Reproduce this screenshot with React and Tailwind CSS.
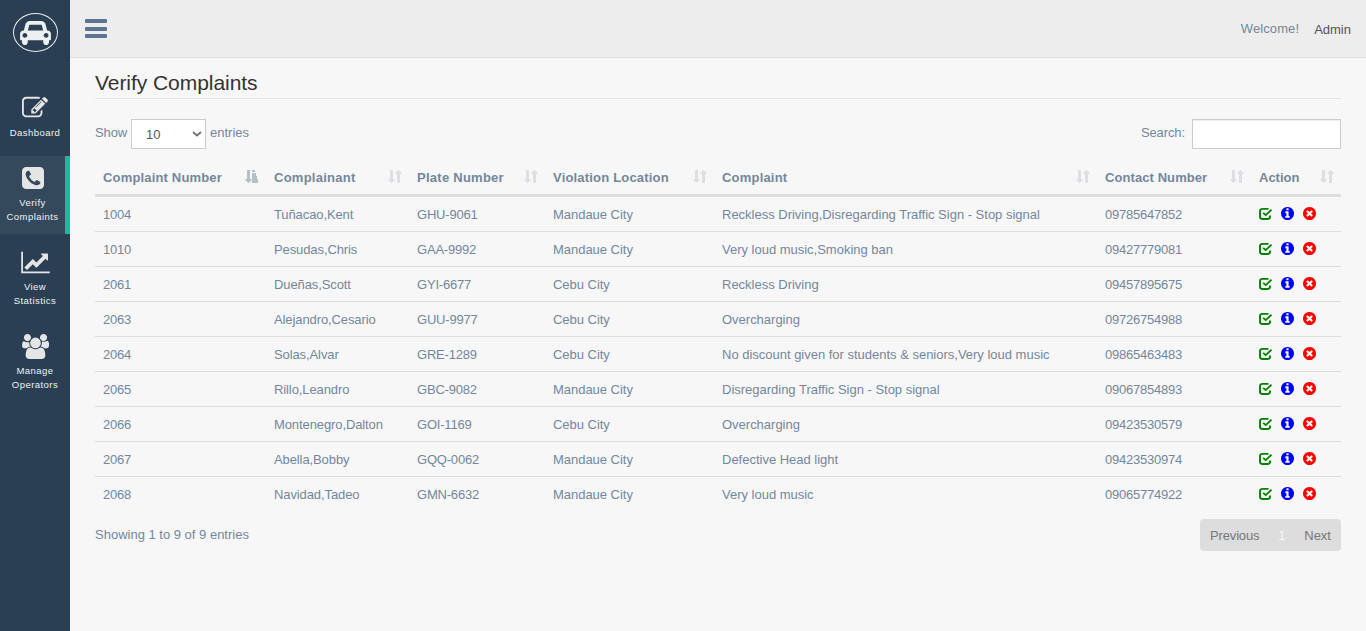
import React from 'react';

const PATHS = {
  car: ['0 0 2048 1792', 'M480 1088q0-66-47-113t-113-47-113 47-47 113 47 113 113 47 113-47 47-113zm36-320h1016l-89-357q-2-8-14-17.5t-21-9.5h-768q-9 0-21 9.5t-14 17.5zm1372 320q0-66-47-113t-113-47-113 47-47 113 47 113 113 47 113-47 47-113zm160-96v384q0 14-9 23t-23 9h-96v128q0 80-56 136t-136 56-136-56-56-136v-128h-1024v128q0 80-56 136t-136 56-136-56-56-136v-128h-96q-14 0-23-9t-9-23v-384q0-93 65.5-158.5t158.5-65.5h28l105-419q23-94 104-157.5t179-63.5h768q98 0 179 63.5t104 157.5l105 419h28q93 0 158.5 65.5t65.5 158.5z'],
  edit: ['0 0 1792 1792', 'M888 1184l116-116-152-152-116 116v56h96v96h56zm440-720q-16-16-33 1l-350 350q-17 17-1 33t33-1l350-350q17-17 1-33zm80 594v190q0 119-84.5 203.5t-203.5 84.5h-832q-119 0-203.5-84.5t-84.5-203.5v-832q0-119 84.5-203.5t203.5-84.5h832q63 0 117 25 15 7 18 23 3 17-9 29l-49 49q-14 14-32 8-23-6-45-6h-832q-66 0-113 47t-47 113v832q0 66 47 113t113 47h832q66 0 113-47t47-113v-126q0-13 9-22l64-64q15-15 35-7t20 29zm-96-738l288 288-672 672h-288v-288zm444 132l-92 92-288-288 92-92q28-28 68-28t68 28l152 152q28 28 28 68t-28 68z'],
  phone: ['128 128 1536 1536', 'M1408 1193q0-11-2-16t-18-16.5-40.5-25-47.5-26.5-45.5-25-28.5-15q-5-3-19-13t-25-15-21-5q-15 0-36.5 20.5t-39.5 45-38.5 45-33.5 20.5q-7 0-16.5-3.5t-15.5-6.5-17-9.5-14-8.5q-99-55-170-126.5t-127-170.5q-2-3-8.5-14t-9.5-17-6.5-15.5-3.5-16.5q0-13 20.5-33.5t45-38.5 45-39.5 20.5-36.5q0-10-5-21t-15-25-13-19q-3-6-15-28.5t-25-45.5-26.5-47.5-25-40.5-16.5-18-16-2q-48 0-101 22-46 21-80 94.5t-34 130.5q0 16 2.5 34t5 30.5 9 33 10 29.5 12.5 33 11 30q60 164 216.5 320.5t320.5 216.5q6 2 30 11t33 12.5 29.5 10 33 9 30.5 5 34 2.5q57 0 130.5-34t94.5-80q22-53 22-101zm256-777v960q0 119-84.5 203.5t-203.5 84.5h-960q-119 0-203.5-84.5t-84.5-203.5v-960q0-119 84.5-203.5t203.5-84.5h960q119 0 203.5 84.5t84.5 203.5z'],
  chart: ['0 0 2048 1792', 'M2048 1536v128h-2048v-1536h128v1408h1920zm-128-1248v435q0 21-19.5 29.5t-35.5-7.5l-121-121-633 633q-10 10-23 10t-23-10l-233-233-416 416-192-192 585-585q10-10 23-10t23 10l233 233 464-464-121-121q-16-16-7.5-35.5t29.5-19.5h435q14 0 23 9t9 23z'],
  users: ['0 0 1920 1792', 'M593 896q-162 5-265 128h-134q-82 0-138-40.5t-56-118.5q0-353 124-353 6 0 43.5 21t97.5 42.5 119 21.5q67 0 133-23-5 37-5 66 0 159 97 293zm1071 637q0 120-73 189.5t-194 69.5h-874q-121 0-194-69.5t-73-189.5q0-53 3.5-103.5t14-109 26.5-108.5 43-97.5 62-81 85.5-53.5 111.5-20q10 0 43 21.5t73 48 107 48 135 21.5 135-21.5 107-48 73-48 43-21.5q61 0 111.5 20t85.5 53.5 62 81 43 97.5 26.5 108.5 14 109 3.5 103.5zm-1024-1277q0 106-75 181t-181 75-181-75-75-181 75-181 181-75 181 75 75 181zm704 384q0 159-112.5 271.5t-271.5 112.5-271.5-112.5-112.5-271.5 112.5-271.5 271.5-112.5 271.5 112.5 112.5 271.5zm576 225q0 78-56 118.5t-138 40.5h-134q-103-123-265-128 97-134 97-293 0-29-5-66 66 23 133 23 59 0 119-21.5t97.5-42.5 43.5-21q124 0 124 353zm-128-609q0 106-75 181t-181 75-181-75-75-181 75-181 181-75 181 75 75 181z'],
  info: ['128 128 1536 1536', 'M1152 1376v-160q0-14-9-23t-23-9h-96v-512q0-14-9-23t-23-9h-320q-14 0-23 9t-9 23v160q0 14 9 23t23 9h96v320h-96q-14 0-23 9t-9 23v160q0 14 9 23t23 9h448q14 0 23-9t9-23zm-128-896v-160q0-14-9-23t-23-9h-192q-14 0-23 9t-9 23v160q0 14 9 23t23 9h192q14 0 23-9t9-23zm640 416q0 209-103 385.5t-279.5 279.5-385.5 103-385.5-103-279.5-279.5-103-385.5 103-385.5 279.5-279.5 385.5-103 385.5 103 279.5 279.5 103 385.5z'],
  times: ['128 128 1536 1536', 'M1277 1122q0-26-19-45l-181-181 181-181q19-19 19-45 0-27-19-46l-90-90q-19-19-46-19-26 0-45 19l-181 181-181-181q-19-19-45-19-27 0-46 19l-90 90q-19 19-19 46 0 26 19 45l181 181-181 181q-19 19-19 45 0 27 19 46l90 90q19 19 46 19 26 0 45-19l181-181 181 181q19 19 45 19 27 0 46-19l90-90q19-19 19-46zm387-226q0 209-103 385.5t-279.5 279.5-385.5 103-385.5-103-279.5-279.5-103-385.5 103-385.5 279.5-279.5 385.5-103 385.5 103 279.5 279.5 103 385.5z'],
};

function Icon({ name, className }) {
  const [viewBox, d] = PATHS[name];
  return (
    <svg viewBox={viewBox} fill="currentColor" className={`block shrink-0 ${className}`}>
      <path d={d} />
    </svg>
  );
}

function CheckIcon() {
  return (
    <svg width="13" height="13" viewBox="0 0 13 13" fill="none" stroke="currentColor" className="block shrink-0 text-[#008000]">
      <path d="M9.500 1.900H3.500Q1 1.900 1 4.200v5.600q0 2.200 2.500 2.200h5q2.500 0 2.500-2.200V8.500" strokeWidth="1.900" />
      <path d="M4.200 5.800l2.500 2.300L12.500 2.700" strokeWidth="1.800" />
    </svg>
  );
}

function SortIcon({ sorted }) {
  return (
    <svg width="14" height="14" viewBox="0 0 14 14" fill="currentColor" className={sorted ? 'block text-[#b3bfcb]' : 'block text-[#dcdfe4]'}>
      <path d="M2 0h3v9h1.500v1.500L3.500 13 .5 10.500V9H2z" />
      {sorted ? <path d="M7 0h3v2H7zM7 3h4v3h1v3h1v4H7z" /> : <path d="M9 13h3V4h1.500V2.500L10.500 0l-3 2.500V4H9z" />}
    </svg>
  );
}

const NAV = [
  { icon: 'edit', lines: ['Dashboard'], size: 'h-[26px] w-[26px]' },
  { icon: 'phone', lines: ['Verify', 'Complaints'], size: 'h-[22px] w-[22px]', active: true },
  { icon: 'chart', lines: ['View', 'Statistics'], size: 'h-[25px] w-[29px]' },
  { icon: 'users', lines: ['Manage', 'Operators'], size: 'h-[25px] w-[27px]' },
];

const COLUMNS = [
  ['Complaint Number', 'w-[171px]', 'tracking-[0.17px]'],
  ['Complainant', 'w-[143px]', 'tracking-[0.25px]'],
  ['Plate Number', 'w-[136px]', 'tracking-[0.26px]'],
  ['Violation Location', 'w-[169px]', 'tracking-[0.19px]'],
  ['Complaint', 'w-[383px]', 'tracking-[0.2px]'],
  ['Contact Number', 'w-[154px]', 'tracking-[0.08px]'],
  ['Action', 'w-[90px]', 'tracking-[0px]'],
];

const ROWS = [
  ['1004', 'Tuñacao,Kent', 'GHU-9061', 'Mandaue City', 'Reckless Driving,Disregarding Traffic Sign - Stop signal', '09785647852'],
  ['1010', 'Pesudas,Chris', 'GAA-9992', 'Mandaue City', 'Very loud music,Smoking ban', '09427779081'],
  ['2061', 'Dueñas,Scott', 'GYI-6677', 'Cebu City', 'Reckless Driving', '09457895675'],
  ['2063', 'Alejandro,Cesario', 'GUU-9977', 'Cebu City', 'Overcharging', '09726754988'],
  ['2064', 'Solas,Alvar', 'GRE-1289', 'Cebu City', 'No discount given for students & seniors,Very loud music', '09865463483'],
  ['2065', 'Rillo,Leandro', 'GBC-9082', 'Mandaue City', 'Disregarding Traffic Sign - Stop signal', '09067854893'],
  ['2066', 'Montenegro,Dalton', 'GOI-1169', 'Cebu City', 'Overcharging', '09423530579'],
  ['2067', 'Abella,Bobby', 'GQQ-0062', 'Mandaue City', 'Defective Head light', '09423530974'],
  ['2068', 'Navidad,Tadeo', 'GMN-6632', 'Mandaue City', 'Very loud music', '09065774922'],
];

const CELL_TRACKING = ['tracking-[-0.23px]', 'tracking-[-0.1px]', 'tracking-[-0.2px]', 'tracking-[-0.03px]', 'tracking-[-0.01px]', 'tracking-[-0.23px]'];

function Sidebar() {
  return (
    <aside className="flex w-[70px] shrink-0 flex-col bg-[#2a3f54]">
      <div className="flex h-[86px] items-start pl-[13px] pt-[13px]">
        <div className="flex h-[39px] w-[45px] items-center justify-center rounded-[50%] border border-[#eaeaea] text-[#ecf0f1]">
          <Icon name="car" className="h-[27px] w-[31px]" />
        </div>
      </div>
      <nav className="flex flex-col gap-[6px]">
        {NAV.map((item) => (
          <a
            key={item.icon}
            className={`flex flex-col items-center pt-2 ${item.lines.length > 1 ? 'h-[78px]' : 'h-[64px]'} ${item.active ? 'border-r-[5px] border-[#1abb9c] bg-[#35495d]' : ''}`}
          >
            <span className="flex h-[28px] items-center text-[#e5e5e5]"><Icon name={item.icon} className={item.size} /></span>
            <span className="mt-[4px] whitespace-nowrap text-center text-[9.500px] leading-[14px] tracking-[0.45px] text-[#f0f2f4]">
              {item.lines.map((l) => <span key={l} className="block">{l}</span>)}
            </span>
          </a>
        ))}
      </nav>
    </aside>
  );
}

export default function App() {
  return (
    <div className="flex h-[631px] w-[1366px] overflow-hidden bg-[#f7f7f7] font-['Liberation_Sans',Arial,sans-serif] text-[13px] leading-[18px] text-[#73879c]">
      <Sidebar />
      <div className="flex min-w-0 flex-1 flex-col">
        <header className="flex h-[58px] shrink-0 items-start justify-between border-b border-[#d9dee4] bg-[#ededed] pl-[15px] pr-[15px]">
          <div className="flex flex-col pt-[19px]">
            <span className="h-[4px] w-[22px] rounded-[1px] bg-[#5a738e]" />
            <span className="mt-[4px] h-[4px] w-[22px] rounded-[1px] bg-[#5a738e]" />
            <span className="mt-[3px] h-[4px] w-[22px] rounded-[1px] bg-[#5a738e]" />
          </div>
          <div className="flex gap-[15px] pt-[20px]">
            <span className="tracking-[0.1px]">Welcome!</span>
            <span className="pt-px text-[#515356]">Admin</span>
          </div>
        </header>

        <main className="flex flex-col pl-[25px] pr-[25px] pt-[13px]">
          <h3 className="h-[28px] border-b border-[#e5e5e5] text-[21px] leading-[24px] tracking-[-0.05px] text-[#333]">Verify Complaints</h3>

          <div className="mt-[20px] flex h-[30px] justify-between">
            <div className="flex items-start">
              <span className="w-[36px] pt-[5px] tracking-[-0.1px]">Show</span>
              <div className="flex h-[30px] w-[75px] items-center justify-between border border-[#ccc] bg-white pl-[14px] pr-[3px] text-[#555]">
                <span className="pt-[2px]">10</span>
                <svg width="10" height="6" viewBox="0 0 10 6" fill="none" stroke="#707070" strokeWidth="1.800"><path d="M1 1l4 3.500L9 1" /></svg>
              </div>
              <span className="pl-[4px] pt-[5px]">entries</span>
            </div>
            <div className="flex items-start gap-[7px]">
              <span className="pt-[5px] tracking-[-0.1px]">Search:</span>
              <input className="h-[30px] w-[149px] border border-[#ccc] bg-white shadow-[inset_0_1px_1px_rgba(0,0,0,0.075)]" />
            </div>
          </div>

          <table className="mt-[11px] w-[1246px] table-fixed border-separate border-spacing-0">
            <thead>
              <tr className="h-[37px]">
                {COLUMNS.map(([label, w, tr], i) => (
                  <th key={label} className={`${w} h-[37px] border-b-[3px] border-[#ddd] p-0 pl-2 pr-[7px] text-left align-top font-bold`}>
                    <div className="flex items-start justify-between whitespace-nowrap pt-[9px]">
                      <span className={tr}>{label}</span>
                      <span className="pt-px"><SortIcon sorted={i === 0} /></span>
                    </div>
                  </th>
                ))}
              </tr>
            </thead>
            <tbody>
              {ROWS.map((row, r) => {
                const line = r < ROWS.length - 1 ? 'border-b border-[#ddd]' : 'border-b border-transparent';
                return (
                  <tr key={row[0]} className="h-[35px]">
                    {row.map((cell, i) => (
                      <td key={i} className={`h-[35px] whitespace-nowrap p-0 pl-2 pt-px ${line} ${CELL_TRACKING[i]}`}>{cell}</td>
                    ))}
                    <td className={`p-0 pl-2 ${line}`}>
                      <div className="flex gap-[9px] pb-px">
                        <CheckIcon />
                        <Icon name="info" className="h-[13px] w-[13px] text-[#0000ff]" />
                        <Icon name="times" className="h-[13px] w-[13px] text-[#ff0000]" />
                      </div>
                    </td>
                  </tr>
                );
              })}
            </tbody>
          </table>

          <div className="mt-[7px] flex items-start justify-between">
            <span className="pt-[7px]">Showing 1 to 9 of 9 entries</span>
            <div className="flex h-[32px] w-[141px] items-center justify-between rounded-[4px] bg-[#ddd] px-[10px] text-[#777]">
              <span className="pt-px tracking-[-0.15px]">Previous</span>
              <span className="pt-px text-[#f7f7f7]">1</span>
              <span className="pt-px">Next</span>
            </div>
          </div>
        </main>
      </div>
    </div>
  );
}
